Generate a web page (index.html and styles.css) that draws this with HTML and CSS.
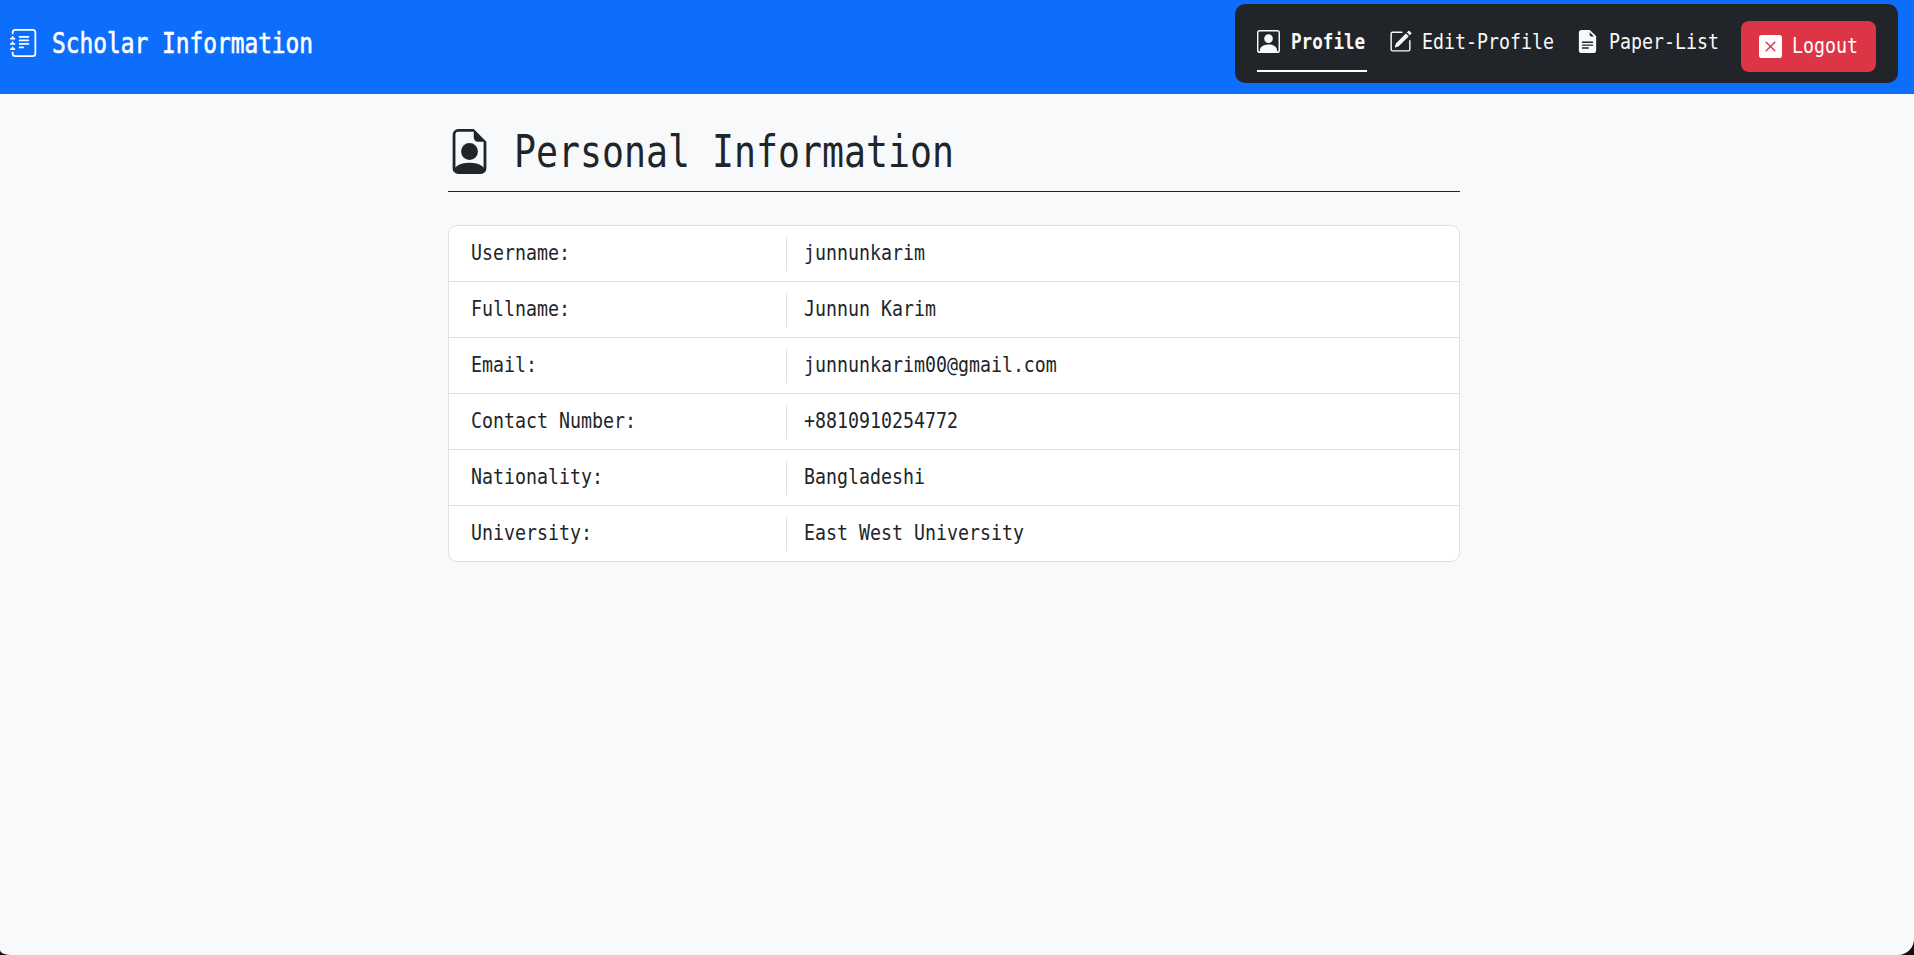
FILE: index.html
```html
<!DOCTYPE html>
<html lang="en">
<head>
    <meta charset="UTF-8">
    <meta name="viewport" content="width=device-width, initial-scale=1.0">
    <title>Scholar Information</title>
    <link rel="stylesheet" href="styles.css">
</head>
<body>

<header class="topbar">
    <a class="brand" href="#">
        <svg class="icon brand-icon" viewBox="0 0 16 16" fill="currentColor">
            <path d="M5 10.5a.5.5 0 0 1 .5-.5h2a.5.5 0 0 1 0 1h-2a.5.5 0 0 1-.5-.5zm0-2a.5.5 0 0 1 .5-.5h5a.5.5 0 0 1 0 1h-5a.5.5 0 0 1-.5-.5zm0-2a.5.5 0 0 1 .5-.5h5a.5.5 0 0 1 0 1h-5a.5.5 0 0 1-.5-.5zm0-2a.5.5 0 0 1 .5-.5h5a.5.5 0 0 1 0 1h-5a.5.5 0 0 1-.5-.5z"/>
            <path d="M3 0h10a2 2 0 0 1 2 2v12a2 2 0 0 1-2 2H3a2 2 0 0 1-2-2v-1h1v1a1 1 0 0 0 1 1h10a1 1 0 0 0 1-1V2a1 1 0 0 0-1-1H3a1 1 0 0 0-1 1v1H1V2a2 2 0 0 1 2-2z"/>
            <path d="M1 5v-.5a.5.5 0 0 1 1 0V5h.5a.5.5 0 0 1 0 1h-2a.5.5 0 0 1 0-1H1zm0 3v-.5a.5.5 0 0 1 1 0V8h.5a.5.5 0 0 1 0 1h-2a.5.5 0 0 1 0-1H1zm0 3v-.5a.5.5 0 0 1 1 0v.5h.5a.5.5 0 0 1 0 1h-2a.5.5 0 0 1 0-1H1z"/>
        </svg>
        <span class="narrow brand-text">Scholar Information</span>
    </a>

    <nav class="menu">
        <a class="menu-link active" href="#">
            <svg class="icon" viewBox="0 0 16 16" fill="currentColor">
                <path d="M11 6a3 3 0 1 1-6 0 3 3 0 0 1 6 0z"/>
                <path d="M2 0a2 2 0 0 0-2 2v12a2 2 0 0 0 2 2h12a2 2 0 0 0 2-2V2a2 2 0 0 0-2-2H2zm12 1a1 1 0 0 1 1 1v12a1 1 0 0 1-1 1v-1c0-1-1-4-6-4s-6 3-6 4v1a1 1 0 0 1-1-1V2a1 1 0 0 1 1-1h12z"/>
            </svg>
            <span class="narrow w-profile">Profile</span>
        </a>
        <a class="menu-link" href="#">
            <svg class="icon" viewBox="0 0 16 16" fill="currentColor">
                <path d="M15.502 1.94a.5.5 0 0 1 0 .706L14.459 3.69l-2-2L13.502.646a.5.5 0 0 1 .707 0l1.293 1.293zm-1.75 2.456-2-2L4.939 9.21a.5.5 0 0 0-.121.196l-.805 2.414a.25.25 0 0 0 .316.316l2.414-.805a.5.5 0 0 0 .196-.12l6.813-6.814z"/>
                <path fill-rule="evenodd" d="M1 13.5A1.5 1.5 0 0 0 2.5 15h11a1.5 1.5 0 0 0 1.5-1.5v-6a.5.5 0 0 0-1 0v6a.5.5 0 0 1-.5.5h-11a.5.5 0 0 1-.5-.5v-11a.5.5 0 0 1 .5-.5H9a.5.5 0 0 0 0-1H2.5A1.5 1.5 0 0 0 1 2.5v11z"/>
            </svg>
            <span class="narrow w-edit">Edit-Profile</span>
        </a>
        <a class="menu-link" href="#">
            <svg class="icon" viewBox="0 0 16 16" fill="currentColor">
                <path d="M9.293 0H4a2 2 0 0 0-2 2v12a2 2 0 0 0 2 2h8a2 2 0 0 0 2-2V4.707A1 1 0 0 0 13.707 4L10 .293A1 1 0 0 0 9.293 0zM9.5 3.5v-2l3 3h-2a1 1 0 0 1-1-1zM4.5 9a.5.5 0 0 1 0-1h7a.5.5 0 0 1 0 1h-7zM4 10.5a.5.5 0 0 1 .5-.5h7a.5.5 0 0 1 0 1h-7a.5.5 0 0 1-.5-.5zm.5 2.5a.5.5 0 0 1 0-1h4a.5.5 0 0 1 0 1h-4z"/>
            </svg>
            <span class="narrow w-paper">Paper-List</span>
        </a>
        <a class="logout" href="#">
            <svg class="icon" viewBox="0 0 16 16" fill="currentColor">
                <path d="M2 0a2 2 0 0 0-2 2v12a2 2 0 0 0 2 2h12a2 2 0 0 0 2-2V2a2 2 0 0 0-2-2H2zm3.354 4.646L8 7.293l2.646-2.647a.5.5 0 0 1 .708.708L8.707 8l2.647 2.646a.5.5 0 0 1-.708.708L8 8.707l-2.646 2.647a.5.5 0 0 1-.708-.708L7.293 8 4.646 5.354a.5.5 0 1 1 .708-.708z"/>
            </svg>
            <span class="narrow w-logout">Logout</span>
        </a>
    </nav>
</header>

<main class="content">
    <h1 class="page-title">
        <svg class="icon title-icon" viewBox="0 0 16 16" fill="currentColor">
            <path d="M11 8a3 3 0 1 1-6 0 3 3 0 0 1 6 0z"/>
            <path d="M14 14V4.5L9.5 0H4a2 2 0 0 0-2 2v12a2 2 0 0 0 2 2h8a2 2 0 0 0 2-2zM9.5 3A1.5 1.5 0 0 0 11 4.5h2v9.255S12 12 8 12s-5 1.755-5 1.755V2a1 1 0 0 1 1-1h5.5v2z"/>
        </svg>
        <span class="narrow title-text">Personal Information</span>
    </h1>

    <ul class="info-list">
        <li class="info-row">
            <div class="info-label"><span class="narrow">Username:</span></div>
            <div class="info-value"><span class="narrow">junnunkarim</span></div>
        </li>
        <li class="info-row">
            <div class="info-label"><span class="narrow">Fullname:</span></div>
            <div class="info-value"><span class="narrow">Junnun Karim</span></div>
        </li>
        <li class="info-row">
            <div class="info-label"><span class="narrow">Email:</span></div>
            <div class="info-value"><span class="narrow">junnunkarim00@gmail.com</span></div>
        </li>
        <li class="info-row">
            <div class="info-label"><span class="narrow">Contact Number:</span></div>
            <div class="info-value"><span class="narrow">+8810910254772</span></div>
        </li>
        <li class="info-row">
            <div class="info-label"><span class="narrow">Nationality:</span></div>
            <div class="info-value"><span class="narrow">Bangladeshi</span></div>
        </li>
        <li class="info-row">
            <div class="info-label"><span class="narrow">University:</span></div>
            <div class="info-value"><span class="narrow">East West University</span></div>
        </li>
    </ul>
</main>

</body>
</html>
```

FILE: styles.css
```css
html {
    background-color: #1a0a14;
}
body {
    margin: 0;
    height: 955px;
    overflow: hidden;
    background-color: #f8f9fa;
    color: #212529;
    font-family: "DejaVu Sans Mono", "Liberation Mono", monospace;
    font-size: 22px;
    border-bottom-left-radius: 10px 5px;
    border-bottom-right-radius: 16px;
}
a {
    color: inherit;
    text-decoration: none;
}

/* the text face is tall and narrow, so squeeze the mono font sideways */
.narrow {
    display: inline-block;
    white-space: nowrap;
    transform: scaleX(0.83);
    transform-origin: left center;
}
.icon {
    display: block;
    flex: none;
    width: 23px;
    height: 23px;
}

.topbar {
    display: flex;
    justify-content: space-between;
    align-items: flex-start;
    height: 94px;
    padding: 4px 16px 0 10px;
    box-sizing: border-box;
    background-color: #0d6efd;
    color: #fff;
}
.brand {
    display: flex;
    align-items: center;
    gap: 14px;
    height: 78px;
}
.brand-icon {
    width: 28px;
    height: 28px;
}
.brand-text {
    font-size: 27.5px;
    width: 259px;
    -webkit-text-stroke: 0.6px #fff;
}

.menu {
    display: flex;
    align-items: flex-end;
    height: 79px;
    padding: 0 22px 11px;
    box-sizing: border-box;
    background-color: #212529;
    border-radius: 10px;
}
.menu-link {
    display: flex;
    align-items: center;
    gap: 10px;
    height: 56px;
    margin-right: 22px;
    padding-bottom: 4px;
    box-sizing: border-box;
    border-bottom: 2px solid transparent;
    color: #f8f9fa;
}
.menu-link.active {
    gap: 11px;
    margin-right: 22px;
    font-weight: bold;
    border-bottom-color: #fff;
}
.w-profile { width: 76px; transform: scaleX(0.8); }
.w-edit { width: 132px; }
.w-paper { width: 107px; margin-right: 3px; }
.w-logout { width: 65px; margin-bottom: 2px; }

.logout {
    display: flex;
    align-items: center;
    gap: 10px;
    height: 51px;
    padding: 0 19px 0 18px;
    background-color: #dc3545;
    border-radius: 8px;
    color: #fff;
}

.content {
    width: 1012px;
    margin-left: 448px;
}
.page-title {
    display: flex;
    align-items: center;
    gap: 22px;
    height: 98px;
    margin: 0 0 33px;
    padding: 18px 0 0 2px;
    box-sizing: border-box;
    border-bottom: 1px solid #212529;
    font-size: 45px;
    font-weight: normal;
}
.title-icon {
    width: 45px;
    height: 45px;
    margin-left: -3px;
}
.title-text {
    transform: scaleX(0.812);
}

.info-list {
    list-style: none;
    margin: 0;
    padding: 0;
    background-color: #fff;
    border: 1px solid #dee2e6;
    border-radius: 9px;
}
.info-row {
    display: flex;
    align-items: center;
    height: 56px;
    box-sizing: border-box;
    border-top: 1px solid #dee2e6;
}
.info-row:first-child {
    border-top: none;
    height: 55px;
}
.info-row .narrow {
    margin-bottom: 2px;
}
.info-label {
    width: 337px;
    padding-left: 22px;
    box-sizing: border-box;
}
.info-value {
    display: flex;
    align-items: center;
    height: 34px;
    padding-left: 17px;
    border-left: 1px solid #dee2e6;
}
```
